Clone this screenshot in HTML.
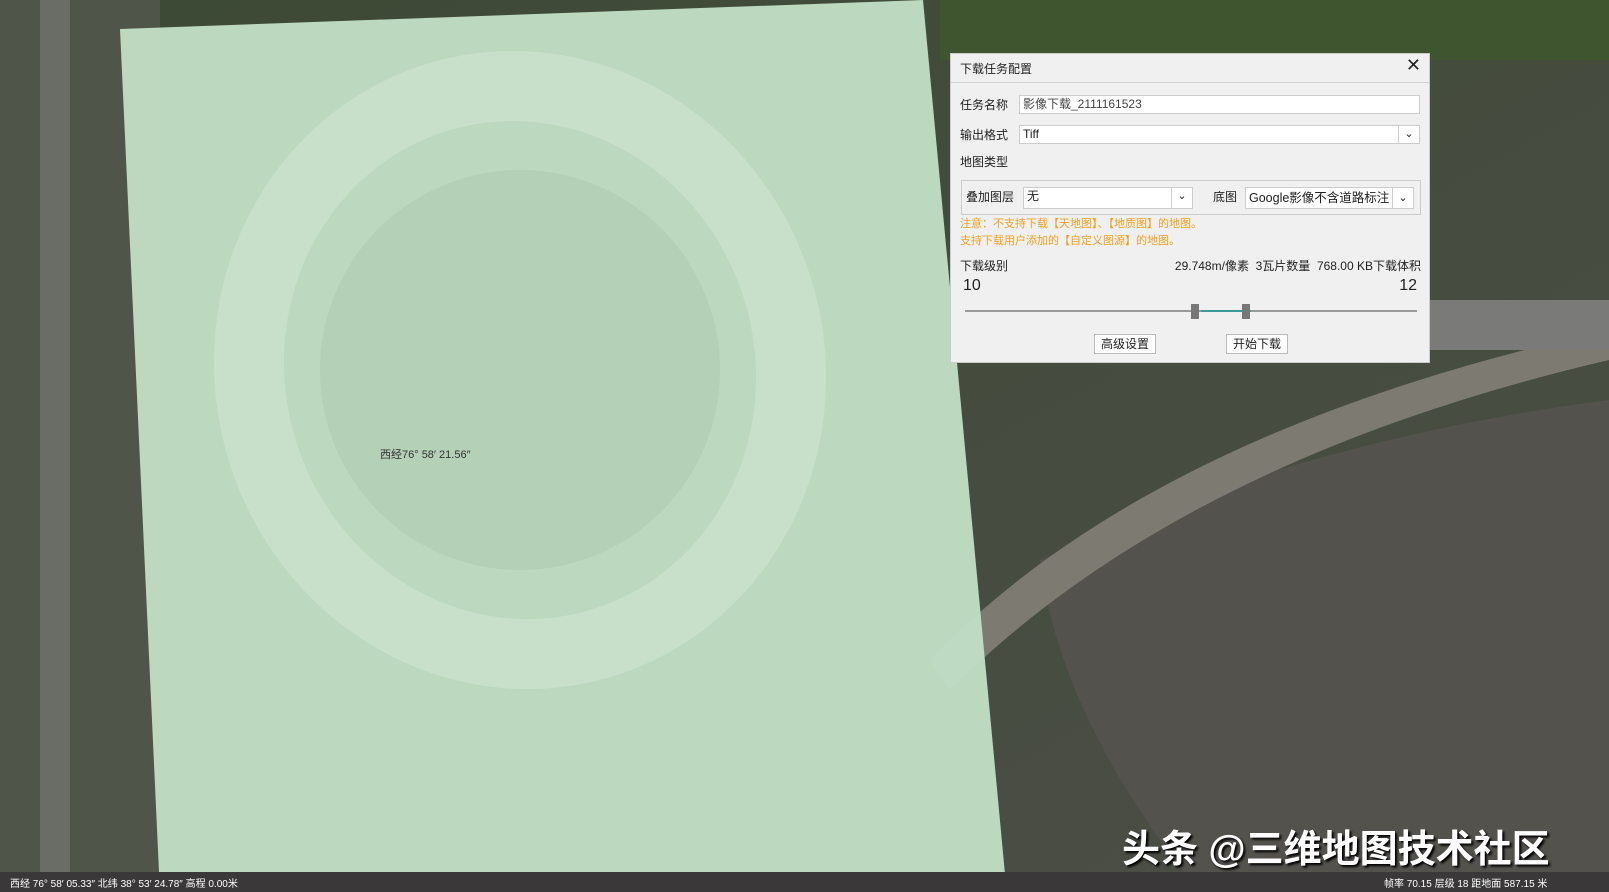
<!DOCTYPE html>
<html><head><meta charset="utf-8"><style>
*{margin:0;padding:0;box-sizing:border-box}
body{width:1609px;height:892px;overflow:hidden;position:relative;background:#4a5040;font-family:"Liberation Sans","Noto Sans CJK SC",sans-serif}
.abs{position:absolute}
.dlg{left:950px;top:53px;width:480px;height:310px;background:#f0f0f0;border:1px solid #ccc;font-size:12px;color:#222}
.inp{position:absolute;background:#fff;border:1px solid #ccc;height:19px;font-size:12px;line-height:17px;padding-left:3px}
.dd{position:absolute;right:0;top:0;width:21px;height:17px;border-left:1px solid #ccc;text-align:center;font-size:11px}
.btn{position:absolute;background:#fff;border:1px solid #bbb;height:20px;width:62px;text-align:center;line-height:18px;font-size:12px}
</style></head><body>
<svg class="abs" style="left:0;top:0" width="1609" height="892">
<defs><linearGradient id="g" x1="0" y1="0" x2="1" y2="1"><stop offset="0" stop-color="#3c4a34"/><stop offset="1" stop-color="#4d4e48"/></linearGradient></defs>
<rect width="1609" height="892" fill="url(#g)"/>
<rect x="0" y="0" width="160" height="892" fill="#4f5548"/>
<rect x="40" y="0" width="30" height="892" fill="#6a6c66"/>
<path d="M1040 560 Q1300 440 1609 400 L1609 892 L1200 892 Q1060 720 1040 560Z" fill="#54524d"/>
<path d="M930 660 Q1150 430 1609 330 L1609 360 Q1180 460 950 690Z" fill="#7d7a72"/>
<rect x="940" y="0" width="670" height="60" fill="#3e5530"/>
<rect x="1430" y="300" width="179" height="50" fill="#7a7a78"/>
<polygon points="120,29 923,0 1005,874 159,872" fill="#c3dfc6" opacity="0.95"/>
<ellipse cx="520" cy="370" rx="270" ry="285" fill="none" stroke="#d6ecd8" stroke-width="70" opacity="0.45" transform="rotate(-15 520 370)"/>
<ellipse cx="520" cy="370" rx="200" ry="200" fill="#acc8ad" opacity="0.5"/>
<rect x="0" y="872" width="1609" height="20" fill="#3a3838"/>
</svg>
<div class="abs" style="left:380px;top:446px;font-size:11px;color:#333">西经76° 58′ 21.56″</div>
<div class="abs" style="left:10px;top:875px;font-size:10px;color:#fff">西经 76° 58′ 05.33″ 北纬 38° 53′ 24.78″ 高程 0.00米</div>
<div class="abs" style="left:1384px;top:875px;font-size:10px;color:#fff">帧率 70.15 层级 18 距地面 587.15 米</div>
<div class="abs" style="left:1122px;top:818px;font-size:38px;font-weight:bold;color:#fff;text-shadow:2px 2px 2px #000">头条 @三维地图技术社区</div>
<div class="abs dlg">
 <div class="abs" style="left:9px;top:6px;font-size:12px">下载任务配置</div>
 <div class="abs" style="right:8px;top:1px;font-size:18px">✕</div>
 <div class="abs" style="left:0;top:28px;width:478px;border-top:1px solid #d0d0d0"></div>
 <div class="abs" style="left:9px;top:42px">任务名称</div>
 <div class="inp" style="left:68px;top:41px;width:401px;color:#444">影像下载_2111161523</div>
 <div class="abs" style="left:9px;top:72px">输出格式</div>
 <div class="inp" style="left:68px;top:71px;width:401px">Tiff<div class="dd">⌄</div></div>
 <div class="abs" style="left:9px;top:99px">地图类型</div>
 <div class="abs" style="left:10px;top:126px;width:460px;height:35px;border:1px solid #ccc"></div>
 <div class="abs" style="left:15px;top:134px">叠加图层</div>
 <div class="inp" style="left:72px;top:133px;width:170px;height:22px">无<div class="dd" style="height:20px">⌄</div></div>
 <div class="abs" style="left:262px;top:134px">底图</div>
 <div class="inp" style="left:294px;top:133px;width:169px;height:22px;font-size:12.5px;line-height:20px">Google影像不含道路标注<div class="dd" style="height:20px;background:#fff">⌄</div></div>
 <div class="abs" style="left:9px;top:161px;color:#f0a020;font-size:11px">注意：不支持下载【天地图】、【地质图】的地图。</div>
 <div class="abs" style="left:9px;top:178px;color:#f0a020;font-size:11px">支持下载用户添加的【自定义图源】的地图。</div>
 <div class="abs" style="left:9px;top:203px">下载级别</div>
 <div class="abs" style="right:8px;top:203px">29.748m/像素 &nbsp;3瓦片数量 &nbsp;768.00 KB下载体积</div>
 <div class="abs" style="left:12px;top:223px;font-size:16px">10</div>
 <div class="abs" style="right:12px;top:223px;font-size:16px">12</div>
 <div class="abs" style="left:14px;top:256px;width:452px;height:2px;background:#999"></div>
 <div class="abs" style="left:250px;top:256px;width:50px;height:2px;background:#3a9a98"></div>
 <div class="abs" style="left:240px;top:250px;width:8px;height:15px;background:#777"></div>
 <div class="abs" style="left:291px;top:250px;width:8px;height:15px;background:#777"></div>
 <div class="btn" style="left:143px;top:280px">高级设置</div>
 <div class="btn" style="left:275px;top:280px">开始下载</div>
</div>
</body></html>
